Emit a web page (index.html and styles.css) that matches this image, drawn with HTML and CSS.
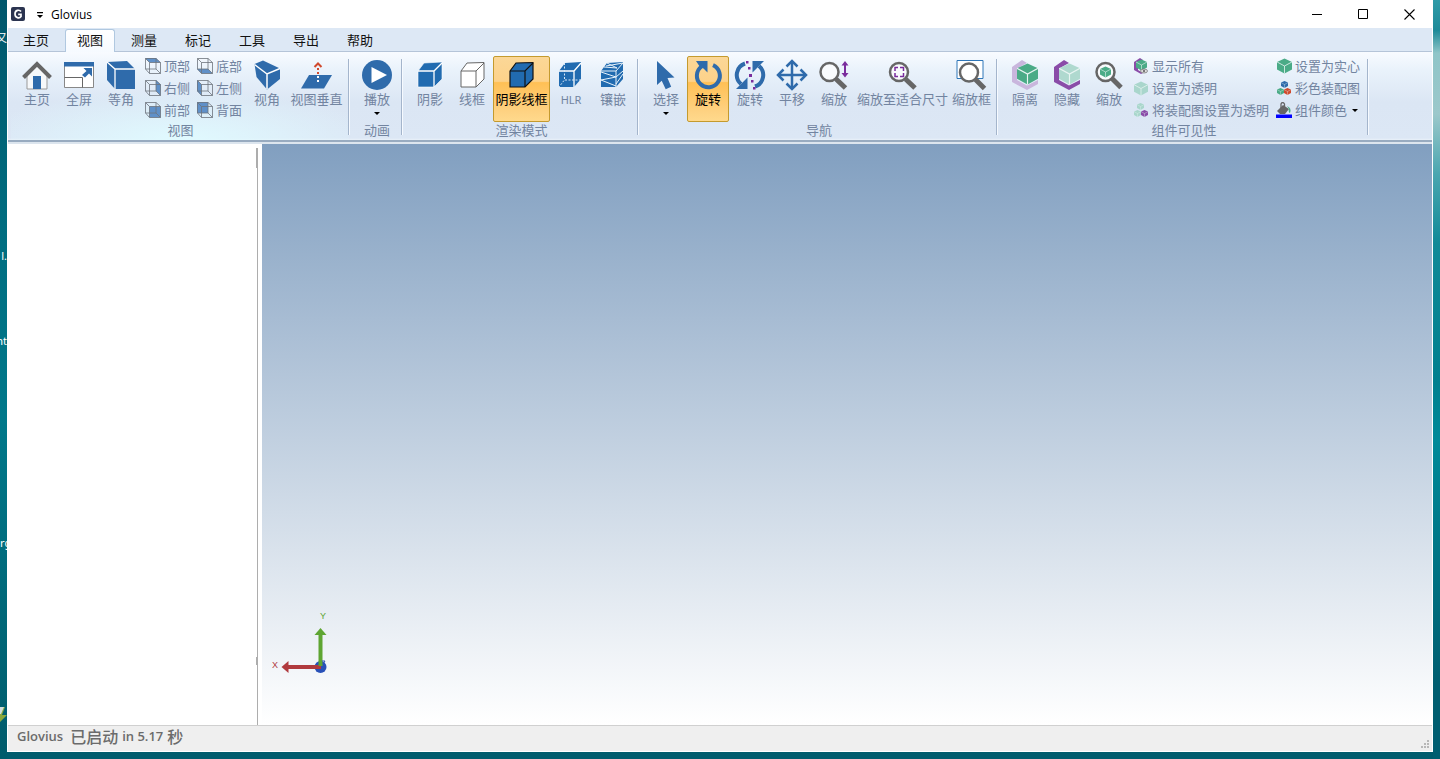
FILE: index.html
```html
<!DOCTYPE html>
<html lang="zh-CN">
<head>
<meta charset="utf-8">
<title>Glovius</title>
<link rel="stylesheet" href="styles.css">
</head>
<body>
<svg class="defs" aria-hidden="true">
  <symbol id="wire" viewBox="0 0 16 16"><path d="M.5 .5h10.500v10.500h-10.500zM4.500 4.500h11v11h-11zM.5 .5l4 4M11 .5l4.500 4M.5 11l4 4.500M11 11l4.500 4.500" fill="none" stroke="#6d737c" stroke-width=".8"/></symbol>
  <symbol id="hex" viewBox="0 0 22 22"><path d="M11 0l11 5v11l-11 6l-11-6v-11z"/><path d="M0 5l11 6l11-6M11 11v11" fill="none" stroke="#e8f4f2" stroke-width="1.200"/></symbol>
</svg>
<div class="desk-labels" aria-hidden="true">
  <span class="desk-label l1">又</span><span class="desk-label l2">l.</span><span class="desk-label l3">nt</span><span class="desk-label l4">rg</span>
  <svg class="desk-icon" width="7" height="18"><path d="M0 1h5l-3 8h5l-7 7z" fill="#8aa83c"/><path d="M0 1h4l-3 7h-1z" fill="#cfdcdc"/></svg>
</div>
<div class="window">
  <header class="titlebar">
    <svg width="14" height="14" viewBox="0 0 14 14" aria-hidden="true"><rect width="14" height="14" rx="2" fill="#2b3450"/><path d="M10 4.500C8.500 2.500 4 2.800 4 7s4.500 4.600 6 2.600V7.300H7.200" fill="none" stroke="#fff" stroke-width="1.700"/></svg>
    <button class="quick" aria-label="自定义快速访问工具栏"><svg width="6" height="6" viewBox="0 0 6 6"><path d="M0 0h6v1.200H0zM0 3h6L3 6z"/></svg></button>
    <h1>Glovius</h1>
    <div class="caption">
      <button aria-label="最小化"><svg width="11" height="11" viewBox="0 0 11 11"><path d="M0 5.500h10" stroke="#000"/></svg></button>
      <button aria-label="最大化"><svg width="11" height="11" viewBox="0 0 11 11"><path d="M.5 .5h9v9h-9z" fill="none" stroke="#000"/></svg></button>
      <button aria-label="关闭"><svg width="11" height="11" viewBox="0 0 11 11"><path d="M.5 .5l10 10M10.500 .5l-10 10" stroke="#000" stroke-width="1.100"/></svg></button>
    </div>
  </header>
  <nav class="tabs">
    <button>主页</button><button class="active">视图</button><button>测量</button><button>标记</button><button>工具</button><button>导出</button><button>帮助</button>
  </nav>
  <main class="ribbon">
    <section class="group glow">
      <div class="tools">
        <button class="tool"><svg viewBox="0 0 30 30"><path d="M5 15L15 5l10 10v14H5z" fill="#f6f8fa" stroke="#999" stroke-width="1"/><path d="M11 16h8v13h-8z" fill="#2f6bab"/><path d="M1.500 17.500L15 4l13.500 13.500" fill="none" stroke="#666" stroke-width="4"/></svg>主页</button>
        <button class="tool"><svg viewBox="0 0 30 30"><path d="M.5 3.500h29v24H.5z" fill="#fff" stroke="#888"/><path d="M0 2h30v4.500H0z" fill="#2f6bab"/><path d="M.5 17.500h18v10" fill="none" stroke="#666"/><path d="M19.500 8H28v8.500l-3-3-4 4-3-2.500 4.500-4z" fill="#2f6bab"/></svg>全屏</button>
        <button class="tool"><svg viewBox="0 0 30 30"><path d="M1 2l20-1 8 8v20H9l-8-9z" fill="#2f6bab"/><path d="M1 2l8 7h20M9 9v20" fill="none" stroke="#fff" stroke-width="1.300"/></svg>等角</button>
        <div class="stack">
          <button class="mini"><svg viewBox="0 0 16 16"><path d="M0 0h11l4.500 4.500h-11z" fill="#5f90c8"/><use href="#wire"/></svg>顶部</button>
          <button class="mini"><svg viewBox="0 0 16 16"><path d="M11 0l4.500 4.500v11L11 11z" fill="#5f90c8"/><use href="#wire"/></svg>右侧</button>
          <button class="mini"><svg viewBox="0 0 16 16"><path d="M4.500 4.500h11v11h-11z" fill="#5f90c8"/><use href="#wire"/></svg>前部</button>
        </div>
        <div class="stack">
          <button class="mini"><svg viewBox="0 0 16 16"><path d="M0 11h11l4.500 4.500h-11z" fill="#5f90c8"/><use href="#wire"/></svg>底部</button>
          <button class="mini"><svg viewBox="0 0 16 16"><path d="M0 0l4.500 4.500v11L0 11z" fill="#5f90c8"/><use href="#wire"/></svg>左侧</button>
          <button class="mini"><svg viewBox="0 0 16 16"><path d="M0 0h11v11H0z" fill="#5f90c8"/><use href="#wire"/></svg>背面</button>
        </div>
        <button class="tool"><svg viewBox="0 0 30 30"><path d="M2.500 4L11 .5l17 8V19L15 29.500 4.500 17z" fill="#2f6bab"/><path d="M2.500 4.500L15 14l13-5.500M15 14v15" fill="none" stroke="#fff" stroke-width="1.500"/></svg>视角</button>
        <button class="tool wide"><svg viewBox="0 0 30 30"><path d="M7 15h23l-8 13.500H-1z" fill="#2f6bab"/><path d="M16 8v7" stroke="#d0492d" stroke-width="2" stroke-dasharray="2 2"/><path d="M12.500 7L16 3.500 19.500 7" fill="none" stroke="#d0492d" stroke-width="2"/><path d="M16 16v7" stroke="#fff" stroke-width="2" stroke-dasharray="2 2"/></svg>视图垂直</button>
      </div>
      <h2>视图</h2>
    </section>
    <section class="group">
      <div class="tools">
        <button class="tool"><svg viewBox="0 0 30 30"><circle cx="15" cy="15" r="15" fill="#2f6bab"/><path d="M9.500 7v16L25 15z" fill="#fff"/></svg>播放<i class="drop"></i></button>
      </div>
      <h2>动画</h2>
    </section>
    <section class="group">
      <div class="tools">
        <button class="tool"><svg viewBox="0 0 30 30"><path d="M3 11l6-8 18-1v17l-8 8H3z" fill="#216bb0" stroke="#fff" stroke-width=".6"/><path d="M3 11h16l8-8M19 11v16" fill="none" stroke="#fff" stroke-width="1.300"/></svg>阴影</button>
        <button class="tool"><svg viewBox="0 0 30 30"><path d="M4 11l6-8 17-.500v16.500l-8 8H4z" fill="#fff" stroke="#666"/><path d="M4 11h15l8-8M19 11v16" fill="none" stroke="#666"/></svg>线框</button>
        <button class="tool wide selected"><svg viewBox="0 0 30 30"><path d="M3 11l6-8 17-.500v16.500l-8 8H3z" fill="#216bb0" stroke="#111" stroke-width="1.200"/><path d="M3 11h15l8-8M18 11v16" fill="none" stroke="#111" stroke-width="1.200"/></svg>阴影线框</button>
        <button class="tool"><svg viewBox="0 0 30 30"><path d="M3 11l6-8 16-1v17l-7 8H3z" fill="#216bb0"/><path d="M3 11h15l7-8M18 11v16" fill="none" stroke="#fff" stroke-width="1.300"/><path d="M8.500 3v17H25M8 20.500l-5 6.500" fill="none" stroke="#d7e6f5" stroke-dasharray="2 1.500"/></svg><span class="latin">HLR</span></button>
        <button class="tool"><svg viewBox="0 0 30 30"><path d="M3 11l6-8 16-1v17l-7 8H3z" fill="#216bb0"/><path d="M3 11h15l7-8M18 11v16M3 12l15 5L3 20l15 6M18 17l7-6M18 24l7-10M6 7l13 1M9 3l10 5M8 6l17-3" fill="none" stroke="#e8f2fa"/></svg>镶嵌</button>
      </div>
      <h2>渲染模式</h2>
    </section>
    <section class="group">
      <div class="tools">
        <button class="tool"><svg viewBox="0 0 30 30"><path d="M6 1l17.500 16.500-7 .5 3.700 8.700-5.500 2.600-4-8.600L6 25z" fill="#2f6bab"/></svg>选择<i class="drop"></i></button>
        <button class="tool selected"><svg viewBox="0 0 30 30"><path d="M20 5.200A11.500 11.500 0 1 1 8.500 6.500" fill="none" stroke="#2f6bab" stroke-width="4"/><path d="M3 1h11.500v11.500l-4-4L7 7z" fill="#2f6bab"/></svg>旋转</button>
        <button class="tool"><svg viewBox="0 0 30 30"><path d="M10 3.500A12 12 0 0 0 6 24M20 26.500A12 12 0 0 0 24 6" fill="none" stroke="#2f6bab" stroke-width="4"/><path d="M12.500 17.500V29H1l4-4zM17.500 12.500V1H29l-4 4z" fill="#2f6bab"/><path d="M11 1h2.500v2.500H11zM13 7h2.500v2.500H13zM14 14h3v3h-3zM16 20h2.500v2.500H16zM18 27h2.500v2.500H18z" fill="#7a2d9d"/></svg>旋转</button>
        <button class="tool"><svg viewBox="0 0 30 30"><path d="M15 2v26M2 15h26" stroke="#2f6bab" stroke-width="2.500"/><path d="M9.500 6.500L15 1l5.500 5.500M9.500 23.500L15 29l5.500-5.500M6.500 9.500L1 15l5.500 5.500M23.500 9.500L29 15l-5.500 5.500" fill="none" stroke="#2f6bab" stroke-width="2.500"/></svg>平移</button>
        <button class="tool"><svg viewBox="0 0 30 30"><circle cx="10.500" cy="12" r="9" fill="#f9fbfd" stroke="#666" stroke-width="2.500"/><path d="M17 19l9.500 9" stroke="#666" stroke-width="5"/><path d="M26 3v13" stroke="#7a2d9d" stroke-width="2"/><path d="M22.500 5.500L26 1l3.500 4.500zM22.500 13l3.500 4.500L29.500 13z" fill="#7a2d9d"/></svg>缩放</button>
        <button class="tool"><svg viewBox="0 0 30 30"><circle cx="11" cy="12" r="9" fill="#f9fbfd" stroke="#666" stroke-width="2.500"/><path d="M17.500 19l9.500 9" stroke="#666" stroke-width="5"/><path d="M7 11V7.500H10M12 7.500h3.500v3.500M15.500 13v3.500H12M10 16.500H7V13" fill="none" stroke="#7a2d9d" stroke-width="1.500"/></svg>缩放至适合尺寸</button>
        <button class="tool"><svg viewBox="0 0 30 30"><path d="M0 .5h26v18H0z" fill="#fff" stroke="#2f76b8"/><circle cx="12" cy="12.500" r="9" fill="#fff" stroke="#666" stroke-width="2.500"/><path d="M18.500 19.500l9 9" stroke="#666" stroke-width="5"/></svg>缩放框</button>
      </div>
      <h2>导航</h2>
    </section>
    <section class="group">
      <div class="tools">
        <button class="tool"><svg viewBox="0 0 30 30"><path d="M2 7L12 0l5 3L7 8.500V20l10 5.500L28 20v4l-11 6L2 22z" fill="#c9b6dd"/><use href="#hex" x="7" y="3" width="21" height="22" fill="#4bab87"/></svg>隔离</button>
        <button class="tool"><svg viewBox="0 0 30 30"><path d="M2 7L12 0l5 3L7 8.500V20l10 5.500L28 20v4l-11 6L2 22z" fill="#8a4ca8"/><use href="#hex" x="7" y="3" width="21" height="22" fill="#afd9cf"/></svg>隐藏</button>
        <button class="tool"><svg viewBox="0 0 30 30"><circle cx="11.500" cy="12" r="9" fill="#f9fbfd" stroke="#666" stroke-width="2.500"/><path d="M18 18.500l9 9" stroke="#666" stroke-width="5"/><use href="#hex" x="6" y="6" width="11" height="12" fill="#4bab87"/></svg>缩放</button>
        <div class="stack">
          <button class="mini"><svg viewBox="0 0 16 16"><path d="M1 4l6-4 3 2-5 3v7l5 3-2 1-7-4z" fill="#8a4ca8"/><use href="#hex" x="3" y="1" width="11" height="12" fill="#4bab87"/><ellipse cx="11" cy="13" rx="3.500" ry="2" fill="#ddd" stroke="#777" stroke-width=".8"/><circle cx="11" cy="13" r="1" fill="#555"/></svg>显示所有</button>
          <button class="mini"><svg viewBox="0 0 16 16"><use href="#hex" x="1" y="1" width="14" height="15" fill="#a9d6cc"/></svg>设置为透明</button>
          <button class="mini"><svg viewBox="0 0 16 16"><use href="#hex" x="4" y="1" width="7" height="7" fill="#a9d6cc"/><use href="#hex" x="1" y="8" width="7" height="7" fill="#a9d6cc"/><use href="#hex" x="8" y="8" width="7" height="7" fill="#8a4ca8"/></svg>将装配图设置为透明</button>
        </div>
        <div class="stack">
          <button class="mini"><svg viewBox="0 0 16 16"><use href="#hex" x="1" y="0" width="15" height="16" fill="#4bab87"/></svg>设置为实心</button>
          <button class="mini"><svg viewBox="0 0 16 16"><use href="#hex" x="5" y="1" width="7" height="7" fill="#2f6bab"/><use href="#hex" x="1" y="8" width="7" height="7" fill="#4bab87"/><use href="#hex" x="8" y="8" width="7" height="7" fill="#d0492d"/></svg>彩色装配图</button>
          <button class="mini"><svg viewBox="0 0 16 16"><path d="M1 9l6-6 6 4-4 5H4z" fill="#666"/><path d="M5 6V2q1.500-3 3.500 0v4" fill="none" stroke="#666" stroke-width="1.300"/><path d="M11 4q5 2 3 7-2-1-1-4z" fill="#4bab87"/><path d="M0 12.500h16V16H0z" fill="#00f"/></svg>组件颜色<i class="drop"></i></button>
        </div>
      </div>
      <h2>组件可见性</h2>
    </section>
  </main>
  <div class="workspace">
    <aside class="tree"></aside>
    <div class="splitter"></div>
    <section class="canvas">
      <svg class="triad" width="60" height="66" viewBox="0 0 60 66" role="img" aria-label="坐标轴">
        <circle cx="48.500" cy="57" r="6" fill="#2850b8"/>
        <path d="M14 57h35" stroke="#b03a3e" stroke-width="4"/><path d="M9.500 57l7-6v12z" fill="#b03a3e"/>
        <path d="M48.500 56V22" stroke="#5ea532" stroke-width="4"/><path d="M48.500 18l6 7h-12z" fill="#5ea532"/>
        <text x="0" y="58" fill="#b03a3e">X</text><text x="48" y="9" fill="#5ea532">Y</text>
        <path d="M50 51h3l-2 3" fill="none" stroke="#2850b8"/>
      </svg>
    </section>
  </div>
  <footer class="status"><span>Glovius</span><span class="han started">已启动</span><span>in 5.17</span><span class="han">秒</span>
    <svg class="grip" width="8" height="8" viewBox="0 0 8 8" aria-hidden="true"><path d="M6 0h2v2H6zM3 3h2v2H3zM6 3h2v2H6zM0 6h2v2H0zM3 6h2v2H3zM6 6h2v2H6z" fill="#b8b8b8"/></svg>
  </footer>
</div>
</body>
</html>
```
FILE: styles.css
```css
* { box-sizing: border-box; }
body {
  margin: 0;
  height: 100vh;
  padding: 0 7px 7px;
  position: relative;
  overflow: hidden;
  font: 13px/18px "Noto Sans CJK SC", sans-serif;
  background:
    linear-gradient(#2f9ba8, #1d8a98 4%, #8fc5c8 7%, #9cc8cb 15%, #4aa6b0 23%, #118a98 32%, #00808f 50%, #008a99 58%, #005e70 90%) right top / 7px 100% no-repeat,
    linear-gradient(#00566b, #006d80 30%, #00788a 55%, #005b6b) left top / 7px 100% no-repeat,
    #005c6d;
}
button { font: inherit; color: inherit; background: none; border: 0; padding: 0; margin: 0; white-space: nowrap; }
svg { display: block; flex: none; }
.defs { position: absolute; width: 0; height: 0; }

.desk-labels { position: absolute; left: 0; top: 0; width: 7px; height: 100%; overflow: hidden; color: #fff; font: 11px/14px "Noto Sans", "Noto Sans CJK SC", sans-serif; }
.desk-label { position: absolute; right: 0; white-space: nowrap; }
.l1 { top: 31px; }
.l2 { top: 249px; }
.l3 { top: 334px; }
.l4 { top: 536px; left: 0; right: auto; }
.desk-icon { position: absolute; left: 0; top: 706px; }

.window { height: 100%; display: flex; flex-direction: column; background: #fff; border: 1px solid #fff; border-top: 0; }

.titlebar { height: 28px; flex: none; display: flex; align-items: center; padding: 0 4px 0 3px; }
.quick { padding: 4px 10px 2px 12px; }
.quick svg { margin-right: -5px; }
h1 { margin: 0; font: 12px/18px "Open Sans", sans-serif; padding: 2px 0 0 3px; }
.caption { margin-left: auto; display: flex; gap: 8px; }
.caption button { width: 38px; height: 28px; display: flex; align-items: center; justify-content: center; }

.tabs { height: 24px; flex: none; display: flex; gap: 4px; padding: 1px 3px 0; background: #dde8f5; border-bottom: 1px solid #b5c4d8; }
.tabs button { width: 50px; height: 23px; padding-bottom: 2px; color: #111; }
.tabs .active { background: linear-gradient(#fff, #f6faff); border: 1px solid #b0c8e0; border-bottom: 0; border-radius: 3px 3px 0 0; margin-bottom: -1px; }

.ribbon { flex: none; display: flex; height: 92px; padding: 3px 0 0 3px; color: #7284a0; background: linear-gradient(#f8fbff, #e9f2fb 20%, #dbe6f4 55%, #dce7f5 86px, #e9f1f9 88px, #98abc0 88px, #98abc0 90px, #dce5ee 90px); }
.group { position: relative; padding: 0 4px 0 5px; margin-right: 2px; height: 85px; }
.group::after { content: ""; position: absolute; right: -1px; top: 4px; width: 2px; height: 76px; background: linear-gradient(90deg, #a4b5cc 50%, #f6faff 50%); }
.glow { background: radial-gradient(ellipse 60% 60% at 50% 100%, #e0faff, transparent); }
.tools { display: flex; height: 66px; }
.tool { min-width: 42px; height: 66px; margin-top: 1px; padding: 3px 1px 0; border: 1px solid transparent; border-radius: 2px; display: flex; flex-direction: column; align-items: center; }
.tool svg { width: 30px; height: 30px; overflow: visible; }
.wide { min-width: 57px; }
.selected { color: #000; border-color: #c49a2e; background: linear-gradient(#fbd797, #fdd28a 38%, #ffc055 40%, #fed282 85%, #ffd98c); }
.latin { font: 11px/20px "Noto Sans", sans-serif; }
.drop { width: 0; height: 0; border: 3px solid transparent; border-top-color: #000; border-bottom: 0; }
.tool .drop { margin-top: 4px; }
.stack { display: flex; flex-direction: column; }
.mini { height: 22px; padding: 0 4px 0 3px; display: flex; align-items: center; gap: 3px; }
.mini svg { width: 16px; height: 16px; }
.mini .drop { margin-left: 2px; }
h2 { margin: 0; font: inherit; text-align: center; line-height: 18px; }

.workspace { flex: 1; min-height: 0; display: flex; }
.tree { flex: none; width: 248px; background: #fff; }
.splitter { width: 6px; margin-top: 4px; background: linear-gradient(#adadad, #adadad) 1px 0 / 1px 100% no-repeat, linear-gradient(#adadad, #adadad) 0 0 / 1px 20px no-repeat, linear-gradient(#adadad, #adadad) 0 509px / 1px 8px no-repeat; }
.canvas { flex: 1; display: flex; align-items: flex-end; padding: 0 0 49px 10px; background: linear-gradient(#819fc0, #fff); }
.triad text { font: 9px "Liberation Sans", sans-serif; }

.status { height: 26px; flex: none; display: flex; align-items: center; gap: 4px; padding: 0 3px 6px 9px; background: #efefef; border-top: 1px solid #d0d0d0; color: #6b6b6b; font: 600 13px/20px "Open Sans", "Noto Sans CJK SC", sans-serif; }
.han { font: 500 16px/20px "Noto Sans CJK SC", sans-serif; }
.started { padding-left: 3px; }
.grip { margin: 0 0 -17px auto; }
```
